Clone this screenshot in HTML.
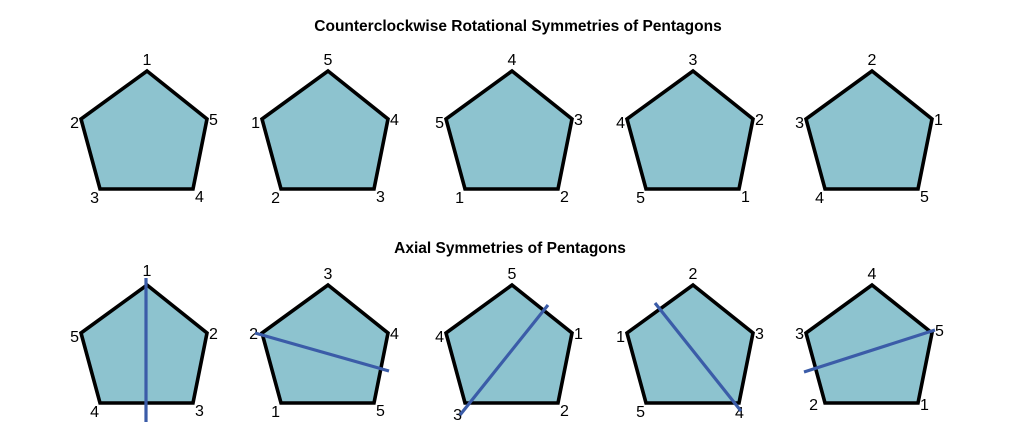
<!DOCTYPE html>
<html><head><meta charset="utf-8"><style>
html,body{margin:0;padding:0;background:#fff;width:1024px;height:431px;overflow:hidden}
svg{display:block}
text{font-family:"Liberation Sans",Arial,sans-serif;font-size:16px;fill:#000}
.t{font-weight:bold;font-size:15.5px}
.p{fill:#8dc3cf;stroke:#000;stroke-width:3.6;stroke-linejoin:miter}
.l{stroke:#3b5ca8;stroke-width:3.2;stroke-linecap:butt}
</style></head><body>
<svg width="1024" height="431" viewBox="0 0 1024 431">
<defs>
<polygon id="pg" class="p" points="0,0 60,48 46,118 -47,118 -66,48"/>
</defs>
<text class="t" x="518" y="31" text-anchor="middle">Counterclockwise Rotational Symmetries of Pentagons</text>
<text class="t" x="510" y="253" text-anchor="middle">Axial Symmetries of Pentagons</text>

<!-- Row 1 -->
<g transform="translate(147,71)"><use href="#pg"/>
<text x="0" y="-6" text-anchor="middle">1</text><text x="62" y="54">5</text><text x="48" y="131">4</text><text x="-48" y="132" text-anchor="end">3</text><text x="-68" y="57" text-anchor="end">2</text></g>
<g transform="translate(328,71)"><use href="#pg"/>
<text x="0" y="-6" text-anchor="middle">5</text><text x="62" y="54">4</text><text x="48" y="131">3</text><text x="-48" y="132" text-anchor="end">2</text><text x="-68" y="57" text-anchor="end">1</text></g>
<g transform="translate(512,71)"><use href="#pg"/>
<text x="0" y="-6" text-anchor="middle">4</text><text x="62" y="54">3</text><text x="48" y="131">2</text><text x="-48" y="132" text-anchor="end">1</text><text x="-68" y="57" text-anchor="end">5</text></g>
<g transform="translate(693,71)"><use href="#pg"/>
<text x="0" y="-6" text-anchor="middle">3</text><text x="62" y="54">2</text><text x="48" y="131">1</text><text x="-48" y="132" text-anchor="end">5</text><text x="-68" y="57" text-anchor="end">4</text></g>
<g transform="translate(872,71)"><use href="#pg"/>
<text x="0" y="-6" text-anchor="middle">2</text><text x="62" y="54">1</text><text x="48" y="131">5</text><text x="-48" y="132" text-anchor="end">4</text><text x="-68" y="57" text-anchor="end">3</text></g>

<!-- Row 2 -->
<g transform="translate(147,285)"><use href="#pg"/>
<text x="0" y="-9" text-anchor="middle">1</text><text x="62" y="54">2</text><text x="48" y="131">3</text><text x="-48" y="132" text-anchor="end">4</text><text x="-68" y="57" text-anchor="end">5</text></g>
<g transform="translate(328,285)"><use href="#pg"/>
<text x="0" y="-6" text-anchor="middle">3</text><text x="62" y="54">4</text><text x="48" y="131">5</text><text x="-48" y="132" text-anchor="end">1</text><text x="-70" y="54" text-anchor="end">2</text></g>
<g transform="translate(512,285)"><use href="#pg"/>
<text x="0" y="-6" text-anchor="middle">5</text><text x="62" y="54">1</text><text x="48" y="131">2</text><text x="-50" y="135" text-anchor="end">3</text><text x="-68" y="57" text-anchor="end">4</text></g>
<g transform="translate(693,285)"><use href="#pg"/>
<text x="0" y="-6" text-anchor="middle">2</text><text x="62" y="54">3</text><text x="42" y="133">4</text><text x="-48" y="132" text-anchor="end">5</text><text x="-68" y="57" text-anchor="end">1</text></g>
<g transform="translate(872,285)"><use href="#pg"/>
<text x="0" y="-6" text-anchor="middle">4</text><text x="63" y="51">5</text><text x="48" y="125">1</text><text x="-54" y="125" text-anchor="end">2</text><text x="-68" y="54" text-anchor="end">3</text></g>

<line class="l" x1="146" y1="278" x2="146" y2="422"/>
<line class="l" x1="255" y1="333" x2="389" y2="371"/>
<line class="l" x1="548" y1="305" x2="460" y2="415"/>
<line class="l" x1="655" y1="303" x2="741" y2="411"/>
<line class="l" x1="935" y1="330" x2="804" y2="372"/>
</svg>
</body></html>
